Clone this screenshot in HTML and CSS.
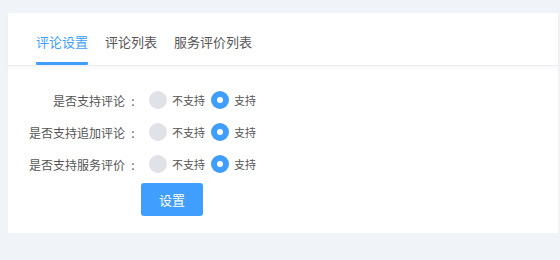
FILE: index.html
```html
<!DOCTYPE html>
<html lang="zh-CN">
<head>
<meta charset="utf-8">
<link rel="stylesheet" href="styles.css">
</head>
<body>
<div class="page">
  <div class="card">
    <div class="tabs">
      <div class="tab active">评论设置</div>
      <div class="tab">评论列表</div>
      <div class="tab">服务评价列表</div>
    </div>
    <div class="form">
      <div class="row">
        <div class="label">是否支持评论<span class="colon">:</span></div>
        <div class="radios">
          <span class="radio"><span class="dot"></span><span class="rtext">不支持</span></span>
          <span class="radio on"><span class="dot"></span><span class="rtext">支持</span></span>
        </div>
      </div>
      <div class="row">
        <div class="label">是否支持追加评论<span class="colon">:</span></div>
        <div class="radios">
          <span class="radio"><span class="dot"></span><span class="rtext">不支持</span></span>
          <span class="radio on"><span class="dot"></span><span class="rtext">支持</span></span>
        </div>
      </div>
      <div class="row">
        <div class="label">是否支持服务评价<span class="colon">:</span></div>
        <div class="radios">
          <span class="radio"><span class="dot"></span><span class="rtext">不支持</span></span>
          <span class="radio on"><span class="dot"></span><span class="rtext">支持</span></span>
        </div>
      </div>
      <div class="actions">
        <button class="btn">设置</button>
      </div>
    </div>
  </div>
</div>
</body>
</html>
```
FILE: styles.css
```css
* { box-sizing: border-box; }
html, body { margin: 0; padding: 0; }
body {
  background: #f0f3f7;
  font-family: "Noto Sans CJK SC", "Noto Sans", sans-serif;
  width: 560px;
  height: 260px;
  overflow: hidden;
}
.page {
  padding: 13px 2px 0 8px;
}
.card {
  background: #fff;
  height: 220px;
}
.tabs {
  display: flex;
  gap: 17px;
  padding-left: 28px;
  height: 53px;
  border-bottom: 1px solid #eceef1;
  box-shadow: 0 2px 4px rgba(0, 0, 0, 0.04);
}
.tab {
  position: relative;
  font-size: 13px;
  line-height: 18px;
  padding-top: 20px;
  color: #555;
}
.tab.active { color: #409eff; }
.tab.active::after {
  content: "";
  position: absolute;
  left: 0;
  right: 0;
  bottom: 0;
  height: 3px;
  background: #409eff;
  border-radius: 1px;
}
.form {
  padding-top: 18px;
}
.row {
  display: flex;
  align-items: center;
  height: 32px;
}
.label {
  width: 129px;
  text-align: right;
  font-size: 12px;
  color: #555;
  white-space: nowrap;
}
.colon {
  display: inline-block;
  width: 12px;
  padding-left: 4px;
  text-align: center;
}
.radios {
  display: flex;
  align-items: center;
  gap: 6px;
  margin-left: 12px;
}
.radio {
  display: flex;
  align-items: center;
  gap: 5px;
}
.dot {
  width: 18px;
  height: 18px;
  border-radius: 50%;
  background: #dfe2e7;
  display: flex;
  align-items: center;
  justify-content: center;
}
.radio.on .dot { background: #409eff; }
.radio.on .dot::after {
  content: "";
  width: 6px;
  height: 6px;
  border-radius: 50%;
  background: #fff;
}
.rtext {
  font-size: 11px;
  color: #555;
}
.actions {
  padding-left: 133px;
  margin-top: 3px;
}
.btn {
  width: 62px;
  height: 33px;
  border: none;
  border-radius: 3px;
  background: #409eff;
  color: #fff;
  font-family: "Noto Sans CJK SC", sans-serif;
  font-size: 13px;
  padding: 0;
}
```
